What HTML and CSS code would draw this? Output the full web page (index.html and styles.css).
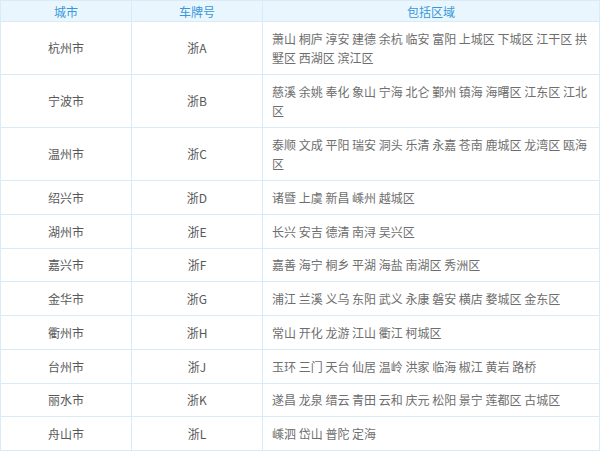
FILE: index.html
```html
<!DOCTYPE html>
<html lang="zh-CN">
<head>
<meta charset="utf-8">
<link rel="stylesheet" href="styles.css">
</head>
<body>
<table class="plates">
  <colgroup>
    <col class="c-city">
    <col class="c-plate">
    <col class="c-area">
  </colgroup>
  <thead>
    <tr><th>城市</th><th>车牌号</th><th>包括区域</th></tr>
  </thead>
  <tbody>
    <tr><td>杭州市</td><td>浙A</td><td class="area">萧山 桐庐 淳安 建德 余杭 临安 富阳 上城区 下城区 江干区 拱墅区 西湖区 滨江区</td></tr>
    <tr><td>宁波市</td><td>浙B</td><td class="area">慈溪 余姚 奉化 象山 宁海 北仑 鄞州 镇海 海曙区 江东区 江北区</td></tr>
    <tr><td>温州市</td><td>浙C</td><td class="area">泰顺 文成 平阳 瑞安 洞头 乐清 永嘉 苍南 鹿城区 龙湾区 瓯海区</td></tr>
    <tr><td>绍兴市</td><td>浙D</td><td class="area">诸暨 上虞 新昌 嵊州 越城区</td></tr>
    <tr><td>湖州市</td><td>浙E</td><td class="area">长兴 安吉 德清 南浔 吴兴区</td></tr>
    <tr><td>嘉兴市</td><td>浙F</td><td class="area">嘉善 海宁 桐乡 平湖 海盐 南湖区 秀洲区</td></tr>
    <tr><td>金华市</td><td>浙G</td><td class="area">浦江 兰溪 义乌 东阳 武义 永康 磐安 横店 婺城区 金东区</td></tr>
    <tr><td>衢州市</td><td>浙H</td><td class="area">常山 开化 龙游 江山 衢江 柯城区</td></tr>
    <tr><td>台州市</td><td>浙J</td><td class="area">玉环 三门 天台 仙居 温岭 洪家 临海 椒江 黄岩 路桥</td></tr>
    <tr><td>丽水市</td><td>浙K</td><td class="area">遂昌 龙泉 缙云 青田 云和 庆元 松阳 景宁 莲都区 古城区</td></tr>
    <tr><td>舟山市</td><td>浙L</td><td class="area">嵊泗 岱山 普陀 定海</td></tr>
  </tbody>
</table>
</body>
</html>
```

FILE: styles.css
```css
html, body {
  margin: 0;
  padding: 0;
  background: #ffffff;
}

body {
  font-family: "Noto Sans CJK SC", "Noto Sans", sans-serif;
  font-size: 12px;
  color: #555555;
}

.plates {
  width: 600px;
  table-layout: fixed;
  border-collapse: collapse;
}

.c-city { width: 131px; }
.c-plate { width: 131px; }

.plates th,
.plates td {
  border: 1px solid #d9ebf6;
  text-align: center;
  vertical-align: middle;
}

.plates th {
  background: #eaf6fd;
  color: #3797dc;
  font-weight: normal;
  font-size: 12px;
  line-height: 19px;
  padding: 0.5px 4px;
}

.plates td {
  line-height: 19.25px;
  padding: 6.75px 9px;
  color: #585858;
}

.plates td.area {
  text-align: left;
  color: #6e6e6e;
  padding: 6.75px 8px 6.75px 9px;
}
```
